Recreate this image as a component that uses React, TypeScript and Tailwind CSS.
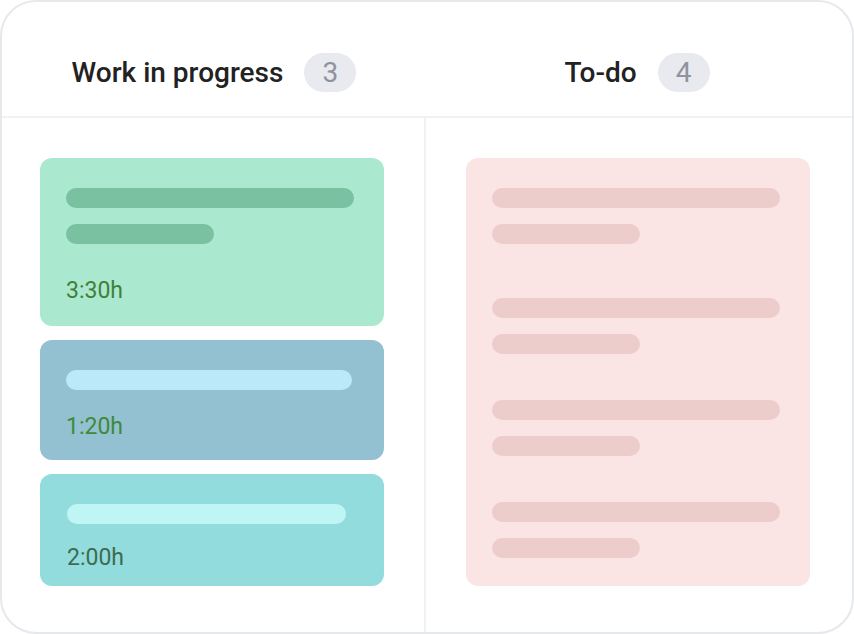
import React from 'react';

const Bar: React.FC<{ w: string; color: string }> = ({ w, color }) => (
  <div className={`h-5 rounded-full ${w} ${color}`} />
);

export default function App() {
  const font = { fontFamily: 'Roboto, "Noto Sans", sans-serif' };

  return (
    <div className="w-[854px] h-[634px] bg-white" style={font}>
      <div className="w-full h-full rounded-[36px] border-2 border-[#e6e8ec] overflow-hidden flex flex-col">
        {/* headers */}
        <div className="h-[116px] border-b-2 border-[#f0f1f3] flex">
          <div className="w-[424px] flex justify-center items-start pt-[51px] gap-[21px]">
            <span className="text-[28px] leading-[39px] font-medium text-[#222222]">Work in progress</span>
            <span className="w-[52px] h-[39px] rounded-full bg-[#e8eaef] text-[28px] leading-[39px] text-[#8e939e] text-center">
              3
            </span>
          </div>
          <div className="flex-1 flex justify-center items-start pt-[51px] gap-[21px] pr-[4px]">
            <span className="text-[28px] leading-[39px] font-medium text-[#222222]">To-do</span>
            <span className="w-[52px] h-[39px] rounded-full bg-[#e8eaef] text-[28px] leading-[39px] text-[#8e939e] text-center">
              4
            </span>
          </div>
        </div>

        {/* columns */}
        <div className="flex-1 flex">
          <div className="w-[424px] border-r-2 border-[#f0f1f3] pl-[38px] pt-[40px] flex flex-col gap-[14px]">
            <div className="w-[344px] h-[168px] rounded-xl bg-[#aae9cf] px-[26px] pt-[30px]">
              <Bar w="w-[288px]" color="bg-[#79c1a0]" />
              <div className="mt-4">
                <Bar w="w-[148px]" color="bg-[#79c1a0]" />
              </div>
              <div className="mt-[31px] text-[23px] leading-[32px] text-[#437f38]">3:30h</div>
            </div>
            <div className="w-[344px] h-[120px] rounded-xl bg-[#93c1d2] px-[26px] pt-[30px]">
              <Bar w="w-[286px]" color="bg-[#bce9fa]" />
              <div className="mt-[21px] text-[23px] leading-[32px] text-[#3f8a3a]">1:20h</div>
            </div>
            <div className="w-[344px] h-[112px] rounded-xl bg-[#93dcdd] pl-[27px] pr-[38px] pt-[30px]">
              <Bar w="w-[279px]" color="bg-[#bff5f5]" />
              <div className="mt-[18px] text-[23px] leading-[32px] text-[#3c6d51]">2:00h</div>
            </div>
          </div>
          <div className="flex-1 pl-[40px] pt-[40px]">
            <div className="w-[344px] h-[428px] rounded-xl bg-[#fbe5e4] px-[26px] pt-[30px]">
              {[0, 1, 2, 3].map((i) => (
                <div key={i} className={i === 0 ? '' : i === 1 ? 'mt-[54px]' : 'mt-[46px]'}>
                  <Bar w="w-[288px]" color="bg-[#edcdcc]" />
                  <div className="mt-4">
                    <Bar w="w-[148px]" color="bg-[#edcdcc]" />
                  </div>
                </div>
              ))}
            </div>
          </div>
        </div>
      </div>
    </div>
  );
}
